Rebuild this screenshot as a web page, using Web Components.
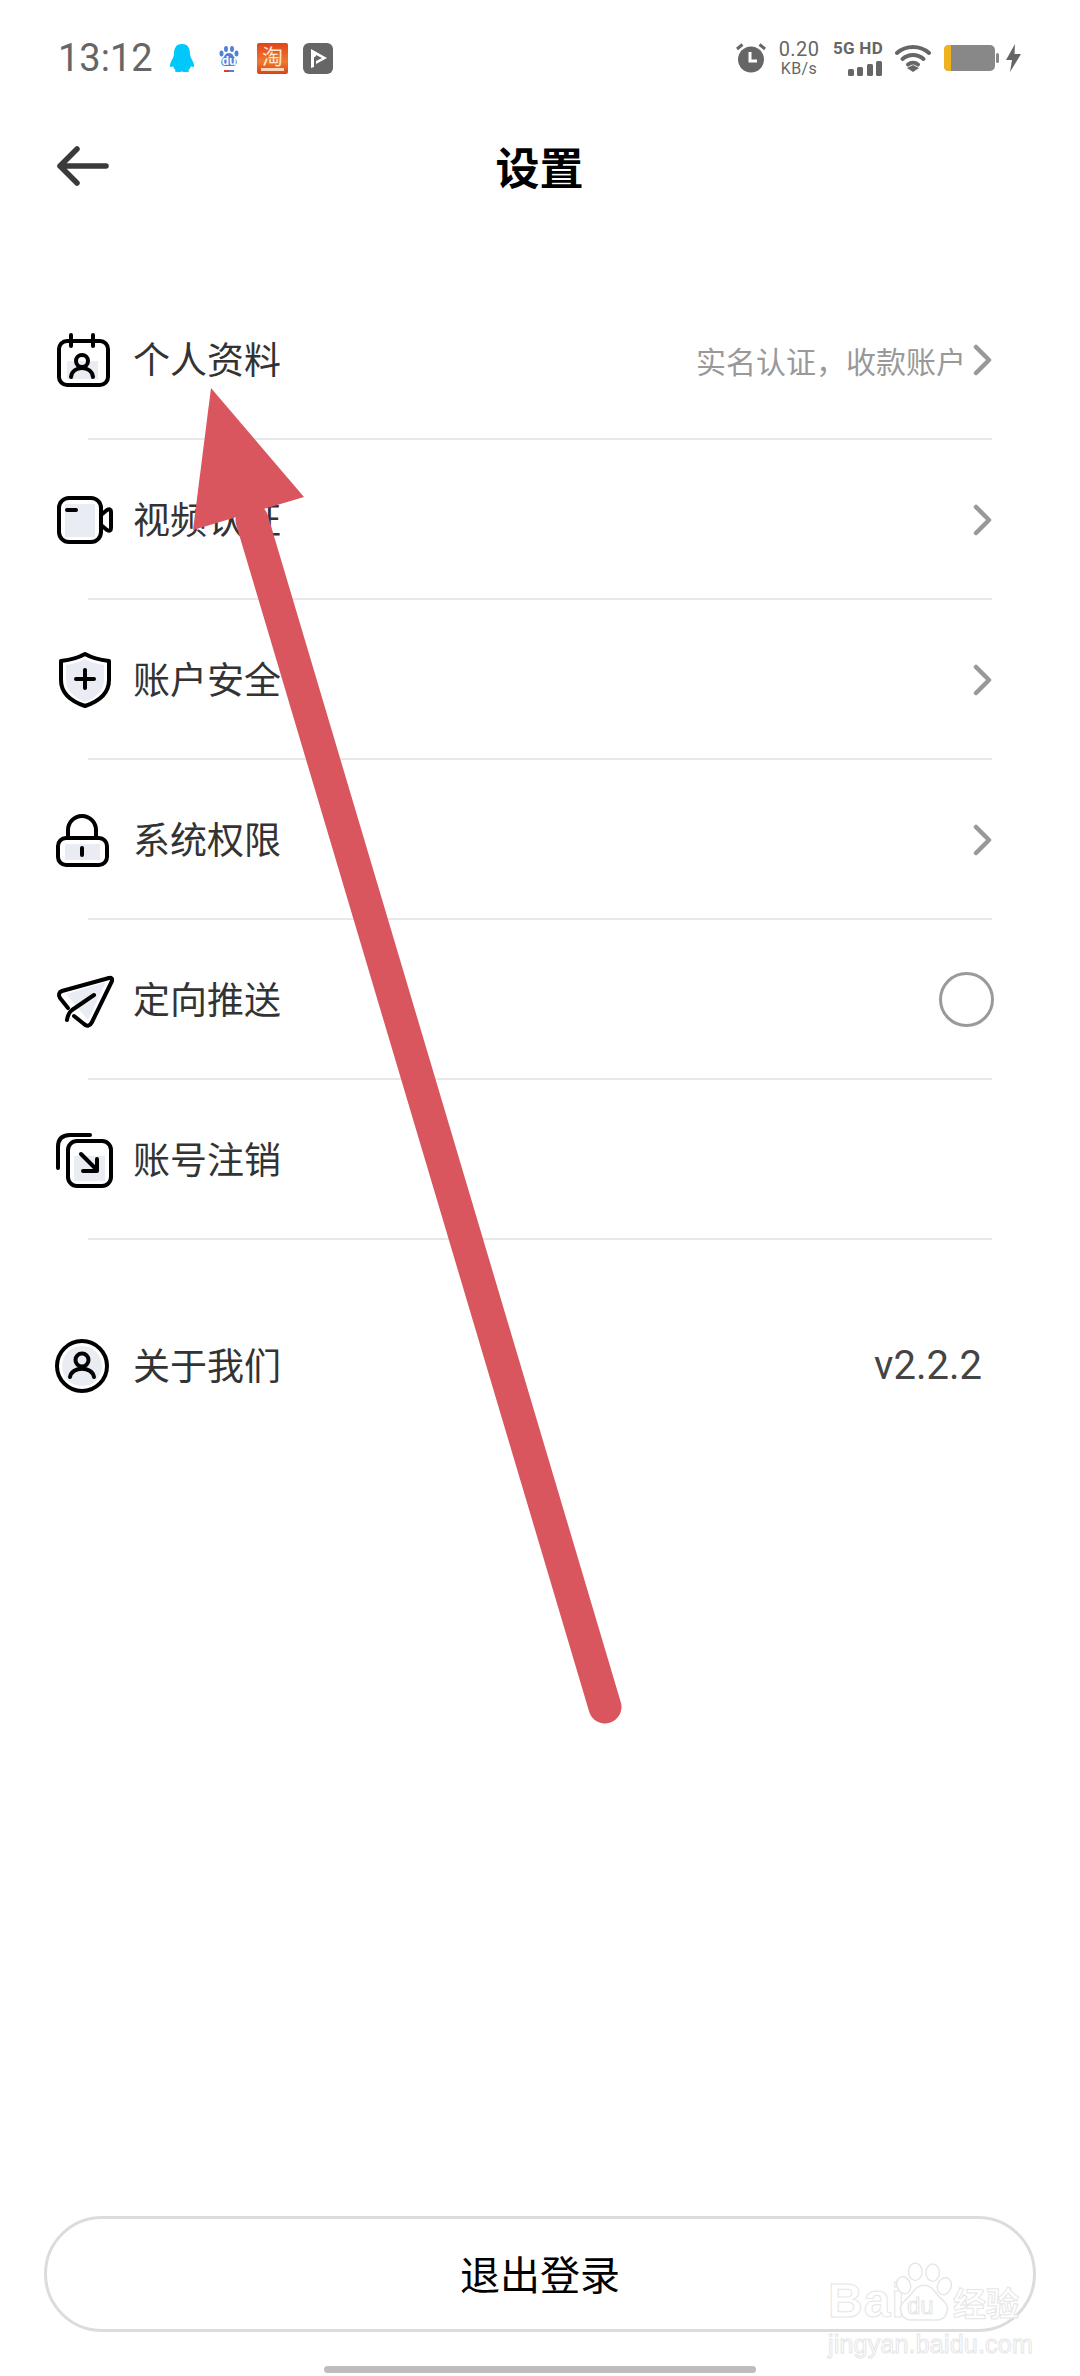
<!DOCTYPE html>
<html lang="zh">
<head>
<meta charset="utf-8">
<title>设置</title>
<style>
    html, body { margin: 0; padding: 0; background: #fff; }
    body { font-family: "Noto Sans CJK SC", "Noto Sans", sans-serif; color: #333; }
</style>
</head>
<body>
<settings-page>
    <status-bar slot="status"></status-bar>
    <app-header slot="header" title-text="设置"></app-header>
    <setting-row divider>
        <setting-icon slot="icon" name="calendar"></setting-icon>
        个人资料
        <span slot="trailing" class="hint">实名认证，收款账户</span>
        <row-chevron slot="trailing"></row-chevron>
    </setting-row>
    <setting-row divider>
        <setting-icon slot="icon" name="video"></setting-icon>
        视频认证
        <row-chevron slot="trailing"></row-chevron>
    </setting-row>
    <setting-row divider>
        <setting-icon slot="icon" name="shield"></setting-icon>
        账户安全
        <row-chevron slot="trailing"></row-chevron>
    </setting-row>
    <setting-row divider>
        <setting-icon slot="icon" name="lock"></setting-icon>
        系统权限
        <row-chevron slot="trailing"></row-chevron>
    </setting-row>
    <setting-row divider>
        <setting-icon slot="icon" name="plane"></setting-icon>
        定向推送
        <row-radio slot="trailing"></row-radio>
    </setting-row>
    <setting-row divider>
        <setting-icon slot="icon" name="cancel"></setting-icon>
        账号注销
    </setting-row>
    <setting-row slot="about">
        <setting-icon slot="icon" name="about"></setting-icon>
        关于我们
        <row-version slot="trailing">v2.2.2</row-version>
    </setting-row>
    <logout-button slot="footer">退出登录</logout-button>
</settings-page>
<annotation-arrow></annotation-arrow>
<baidu-watermark></baidu-watermark>

<script>
class settingsPage extends HTMLElement {
    constructor() {
        super();
        this.attachShadow({ mode: "open" });
    }
    connectedCallback() {
        this.shadowRoot.innerHTML = `
        <style>
            :host { display: flex; flex-direction: column; width: 1080px; height: 2376px; overflow: hidden; }
            .list { margin-top: 60px; }
            .about { margin-top: 46px; }
            .spacer { flex: 1; }
            .home { align-self: center; width: 432px; height: 7px; border-radius: 4px; background: #bdbdbd; margin: 34px 0 3px; }
        </style>
        <slot name="status"></slot>
        <slot name="header"></slot>
        <div class="list"><slot></slot></div>
        <div class="about"><slot name="about"></slot></div>
        <div class="spacer"></div>
        <slot name="footer"></slot>
        <div class="home"></div>
        `;
    }
}
customElements.define("settings-page", settingsPage);

class statusBar extends HTMLElement {
    constructor() {
        super();
        this.attachShadow({ mode: "open" });
    }
    connectedCallback() {
        this.shadowRoot.innerHTML = `
        <style>
            :host { display: flex; align-items: center; height: 116px; padding: 0 58px; box-sizing: border-box; color: #666; font-family: Roboto, "Noto Sans", sans-serif; }
            .time { font-size: 38px; line-height: 1; width: 111px; }
            .left { display: flex; align-items: center; }
            svg { display: block; flex: none; }
            .right { margin-left: auto; display: flex; align-items: center; margin-right: 1px; }
            .speed { display: flex; flex-direction: column; align-items: center; width: 42px; margin: 0 11px 0 11px; line-height: 1; }
            .speed b { font-weight: 400; font-size: 20px; letter-spacing: .4px; }
            .speed i { font-style: normal; font-size: 16px; margin-top: 2px; letter-spacing: .4px; }
            .net { display: flex; flex-direction: column; align-items: flex-end; width: 52px; margin-right: 12px; line-height: 1; }
            .net b { font-size: 17px; font-weight: 700; letter-spacing: .3px; margin-bottom: 3px; white-space: nowrap; }
            .du { font-family: "Liberation Sans", sans-serif; font-size: 12px; font-weight: 700; fill: #fff; }
            .tb { display: flex; flex-direction: column; align-items: center; width: 31px; height: 31px; margin-right: 15px; border-radius: 2px; background: linear-gradient(#e2431c, #ee7a2c 60%, #d9431a); font-family: "Noto Sans CJK SC", sans-serif; font-size: 21px; line-height: 25px; color: #fde6cf; }
            .tb i { display: block; width: 23px; height: 3px; background: #fbd9b8; }
        </style>
        <div class="left">
            <span class="time">13:12</span>
            <svg width="26" height="30" viewBox="0 0 26 30" style="margin-right:23px">
                <path d="M13 1C6.500 1 5 6 5 11C5 14 3 16 1.500 20C0.500 23 1 24.500 2.500 24C3 24 3.500 23.500 4 23C4.500 25 5.500 26 6.500 27C5.500 28 6 29 8 29H11C12 29 12.500 28.500 13 28.200C13.500 28.500 14 29 15 29H18C20 29 20.500 28 19.500 27C20.500 26 21.500 25 22 23C22.500 23.500 23 24 23.500 24C25 24.500 25.500 23 24.500 20C23 16 21 14 21 11C21 6 19.500 1 13 1Z" fill="#00c8fb"/>
            </svg>
            <svg width="22" height="30" viewBox="0 0 22 30" style="margin-right:17px">
                <ellipse cx="8" cy="6" rx="2" ry="3" fill="#4f81d9"/>
                <ellipse cx="14" cy="6" rx="2" ry="3" fill="#4f81d9"/>
                <ellipse cx="3.500" cy="10.500" rx="2" ry="3" fill="#4f81d9"/>
                <ellipse cx="18.500" cy="10.500" rx="2" ry="3" fill="#4f81d9"/>
                <path d="M11 10C7 10 7 13 5 15C2 18 3 23 7 23H15C19 23 20 18 17 15C15 13 15 10 11 10Z" fill="#4f81d9"/>
                <text class="du" x="11" y="22" text-anchor="middle">du</text>
                <rect x="6" y="27" width="5" height="2" fill="#c8443d"/>
                <rect x="11" y="27" width="5" height="2" fill="#4f81d9"/>
            </svg>
            <div class="tb">淘<i></i></div>
            <svg width="30" height="31" viewBox="0 0 30 31">
                <rect width="30" height="31" rx="6" fill="#666"/>
                <path d="M8 6L24 15L13 21V13L11 14.500V24L8 25Z" fill="#fff"/>
                <path d="M13 12L19 15L13 18Z" fill="#666"/>
            </svg>
        </div>
        <div class="right">
            <svg width="32" height="30" viewBox="0 0 32 30">
                <circle cx="16" cy="16.500" r="13" fill="#666"/>
                <path d="M15 9V18H22" fill="none" stroke="#fff" stroke-width="3"/>
                <path d="M2 6L7.500 1.500M30 6L24.500 1.500" stroke="#666" stroke-width="3"/>
            </svg>
            <div class="speed"><b>0.20</b><i>KB/s</i></div>
            <div class="net">
                <b>5G HD</b>
                <svg width="36" height="16" viewBox="0 0 36 16">
                    <rect x="1" y="9" width="6" height="7" rx="1.500" fill="#666"/>
                    <rect x="10" y="7" width="6" height="9" rx="1.500" fill="#666"/>
                    <rect x="20" y="4" width="6" height="12" rx="1.500" fill="#666"/>
                    <rect x="29" y="1" width="6" height="15" rx="1.500" fill="#666"/>
                </svg>
            </div>
            <svg width="36" height="28" viewBox="0 0 36 28" style="margin-right:12px">
                <path d="M2 9C11 1 25 1 34 9" fill="none" stroke="#666" stroke-width="4" stroke-linecap="round"/>
                <path d="M7.500 15C13.500 9.500 22.500 9.500 28.500 15" fill="none" stroke="#666" stroke-width="4" stroke-linecap="round"/>
                <path d="M13 20.500C16 18 20 18 23 20.500" fill="none" stroke="#666" stroke-width="4" stroke-linecap="round"/>
                <path d="M12 24L18 21L24 24L18 28Z" fill="#666"/>
            </svg>
            <svg width="56" height="28" viewBox="0 0 56 28" style="margin-right:7px">
                <rect x="1" y="1" width="51" height="26" rx="5" fill="#888"/>
                <path d="M6 1H8V27H6Q1 27 1 22V6Q1 1 6 1Z" fill="#f0b11f"/>
                <rect x="53" y="9" width="3" height="10" rx="1.500" fill="#888"/>
            </svg>
            <svg width="15" height="28" viewBox="0 0 15 28">
                <path d="M9 0L0 16H6L4 28L15 10H8.500Z" fill="#666"/>
            </svg>
        </div>
        `;
    }
}
customElements.define("status-bar", statusBar);

class appHeader extends HTMLElement {
    constructor() {
        super();
        this.attachShadow({ mode: "open" });
    }
    static get observedAttributes() {
        return ["title-text"];
    }
    attributeChangedCallback(attr, oldVal, newVal) {
        if (attr === "title-text") {
            this.titleText = newVal;
        }
    }
    connectedCallback() {
        this.shadowRoot.innerHTML = `
        <style>
            :host { display: grid; grid-template-columns: 1fr auto 1fr; align-items: center; height: 104px; padding: 0 58px 0 57px; }
            svg { display: block; margin-top: -5px; }
            h1 { margin: 0 0 4px; font-size: 44px; line-height: 1; font-weight: 700; color: #000; }
        </style>
        <svg width="52" height="40" viewBox="0 0 52 40">
            <path d="M20 3L3 20L20 37M3 20H49" fill="none" stroke="#3a3a3a" stroke-width="5.500" stroke-linecap="round" stroke-linejoin="round"/>
        </svg>
        <h1>${this.titleText}</h1>
        <span></span>
        `;
    }
}
customElements.define("app-header", appHeader);

const settingIcons = {
    calendar: `
        <rect x="13" y="31" width="31" height="18" fill="#e9ecf3"/>
        <rect x="5" y="11" width="49" height="44" rx="8"/>
        <path d="M17 5V16M39 5V16"/>
        <circle cx="28" cy="31" r="6"/>
        <path d="M17 47C18 35 38 35 39 47"/>`,
    video: `
        <rect x="11" y="14" width="30" height="33" fill="#e9ecf3"/>
        <rect x="5" y="8" width="42" height="44" rx="10"/>
        <path d="M47 25L53 20Q57 18 57 22V38Q57 42 53 40L47 35"/>
        <path d="M13 20H22"/>`,
    shield: `
        <path d="M31 9C36 12 44 14 50 15V30C50 41 41 48 31 52C21 48 12 41 12 30V15C18 14 26 12 31 9Z" fill="#e9ecf3" stroke="none"/>
        <path d="M31 4C38 8 47 10 55 11V30C55 44 43 52 31 56C19 52 7 44 7 30V11C15 10 24 8 31 4Z"/>
        <path d="M31 20V38M22 29H40"/>`,
    lock: `
        <rect x="11" y="34" width="35" height="16" fill="#e9ecf3"/>
        <rect x="4" y="28" width="49" height="27" rx="8"/>
        <path d="M14 28V20A14 14 0 0 1 42 20V28"/>
        <path d="M28 38V45"/>`,
    plane: `
        <path d="M52 12L12 24L34 50Z" fill="#e9ecf3" stroke="none"/>
        <path d="M55 8C57 7 59 9 58 11L38 52C36 56 33 57 30 54L20 46"/>
        <path d="M14 38L6 28C4 25 5 22 8 21L55 8"/>
        <path d="M40 25L18 40Q14 43 13 50"/>`,
    cancel: `
        <rect x="20" y="26" width="31" height="25" fill="#e9ecf3"/>
        <path d="M36 5H16Q4 5 4 17V38"/>
        <rect x="14" y="11" width="43" height="45" rx="9"/>
        <path d="M27 24L41 38M43 29V41H29"/>`,
    about: `
        <circle cx="28" cy="30" r="20" fill="#e9ecf3" stroke="none"/>
        <circle cx="28" cy="30" r="25"/>
        <circle cx="28" cy="24" r="6.500"/>
        <path d="M16 41C18 30 38 30 40 41"/>`
};

class settingIcon extends HTMLElement {
    constructor() {
        super();
        this.attachShadow({ mode: "open" });
    }
    connectedCallback() {
        this.shadowRoot.innerHTML = `
        <style>
            :host { display: block; width: 60px; height: 60px; }
            svg { display: block; fill: none; stroke: #000; stroke-width: 4; stroke-linecap: round; stroke-linejoin: round; }
            rect[fill], path[fill], circle[fill] { stroke-width: 0; }
        </style>
        <svg width="60" height="60" viewBox="0 0 60 60">${settingIcons[this.getAttribute("name")]}</svg>
        `;
    }
}
customElements.define("setting-icon", settingIcon);

class settingRow extends HTMLElement {
    constructor() {
        super();
        this.attachShadow({ mode: "open" });
    }
    connectedCallback() {
        const line = this.hasAttribute("divider") ? `<div class="line"></div>` : "";
        this.shadowRoot.innerHTML = `
        <style>
            :host { display: block; }
            .main { display: flex; align-items: center; height: 158px; box-sizing: border-box; padding: 1px 86px 0 54px; }
            .label { margin: 0 0 2px 19px; font-size: 37px; line-height: 1; color: #333; }
            .trailing { margin-left: auto; display: flex; align-items: center; font-size: 30px; color: #999; }
            .line { height: 2px; margin: 0 88px; background: #e8e8e8; }
        </style>
        <div class="main">
            <slot name="icon"></slot>
            <span class="label"><slot></slot></span>
            <span class="trailing"><slot name="trailing"></slot></span>
        </div>
        ${line}
        `;
    }
}
customElements.define("setting-row", settingRow);

class rowChevron extends HTMLElement {
    constructor() {
        super();
        this.attachShadow({ mode: "open" });
    }
    connectedCallback() {
        this.shadowRoot.innerHTML = `
        <style>
            :host { display: block; margin-left: 6px; }
            svg { display: block; }
        </style>
        <svg width="22" height="32" viewBox="0 0 22 32">
            <path d="M4 3L17 16L4 29" fill="none" stroke="#999" stroke-width="4.500" stroke-linecap="round" stroke-linejoin="round"/>
        </svg>
        `;
    }
}
customElements.define("row-chevron", rowChevron);

class rowRadio extends HTMLElement {
    constructor() {
        super();
        this.attachShadow({ mode: "open" });
    }
    connectedCallback() {
        this.shadowRoot.innerHTML = `
        <style>
            :host { display: block; width: 55px; height: 55px; box-sizing: border-box; border: 3px solid #9a9a9a; border-radius: 50%; }
        </style>
        `;
    }
}
customElements.define("row-radio", rowRadio);

class rowVersion extends HTMLElement {
    constructor() {
        super();
        this.attachShadow({ mode: "open" });
    }
    connectedCallback() {
        this.shadowRoot.innerHTML = `
        <style>
            :host { display: block; margin: 0 12px 0 0; font-family: Roboto, "Noto Sans", sans-serif; font-size: 40px; line-height: 1; color: #444; }
        </style>
        <slot></slot>
        `;
    }
}
customElements.define("row-version", rowVersion);

class logoutButton extends HTMLElement {
    constructor() {
        super();
        this.attachShadow({ mode: "open" });
    }
    connectedCallback() {
        this.shadowRoot.innerHTML = `
        <style>
            :host { display: flex; align-items: center; justify-content: center; height: 116px; margin: 0 44px; padding-bottom: 3px; box-sizing: border-box; border: 3px solid #dcdcdc; border-radius: 58px; font-size: 40px; line-height: 1; color: #000; }
        </style>
        <slot></slot>
        `;
    }
}
customElements.define("logout-button", logoutButton);

class annotationArrow extends HTMLElement {
    constructor() {
        super();
        this.attachShadow({ mode: "open" });
    }
    connectedCallback() {
        this.shadowRoot.innerHTML = `
        <style>
            :host { position: absolute; left: 0; top: 0; width: 1080px; height: 2376px; pointer-events: none; }
            svg { display: block; }
        </style>
        <svg width="1080" height="2376" viewBox="0 0 1080 2376">
            <path d="M605 1707L252 520" stroke="#da565e" stroke-width="33" stroke-linecap="round"/>
            <path d="M211 388L304 497L193 530Z" fill="#da565e"/>
        </svg>
        `;
    }
}
customElements.define("annotation-arrow", annotationArrow);

class baiduWatermark extends HTMLElement {
    constructor() {
        super();
        this.attachShadow({ mode: "open" });
    }
    connectedCallback() {
        this.shadowRoot.innerHTML = `
        <style>
            :host { position: absolute; left: 828px; top: 2261px; width: 200px; height: 96px; pointer-events: none; font-family: "Liberation Sans", sans-serif; color: rgba(255,255,255,.85); -webkit-text-stroke: 1px #e6e6e6; }
            .top { display: flex; align-items: flex-end; height: 62px; }
            .bai { font-size: 48px; font-weight: 700; line-height: 44px; width: 67px; letter-spacing: 1px; }
            .paw { position: relative; width: 58px; height: 62px; flex: none; }
            .paw svg { display: block; }
            .paw span { position: absolute; left: 12px; top: 33px; font-size: 24px; line-height: 1; }
            .cn { font-family: "Noto Sans CJK SC", sans-serif; font-size: 33px; font-weight: 700; line-height: 42px; }
            .url { font-size: 25px; line-height: 1; margin-top: 9px; letter-spacing: .2px; }
        </style>
        <div class="top">
            <span class="bai">Bai</span>
            <div class="paw">
                <svg width="58" height="62" viewBox="0 0 60 62" fill="#fff" stroke="#e6e6e6" stroke-width="1.500">
                    <ellipse cx="21" cy="10" rx="7" ry="9"/>
                    <ellipse cx="39" cy="11" rx="7" ry="9"/>
                    <ellipse cx="9" cy="24" rx="7" ry="9" transform="rotate(-20 9 24)"/>
                    <ellipse cx="51" cy="25" rx="7" ry="9" transform="rotate(20 51 25)"/>
                    <path d="M30 24C20 24 18 34 10 40C2 47 6 60 18 60H42C54 60 58 47 50 40C42 34 40 24 30 24Z"/>
                </svg>
                <span>du</span>
            </div>
            <span class="cn">经验</span>
        </div>
        <div class="url">jingyan.baidu.com</div>
        `;
    }
}
customElements.define("baidu-watermark", baiduWatermark);
</script>
</body>
</html>
